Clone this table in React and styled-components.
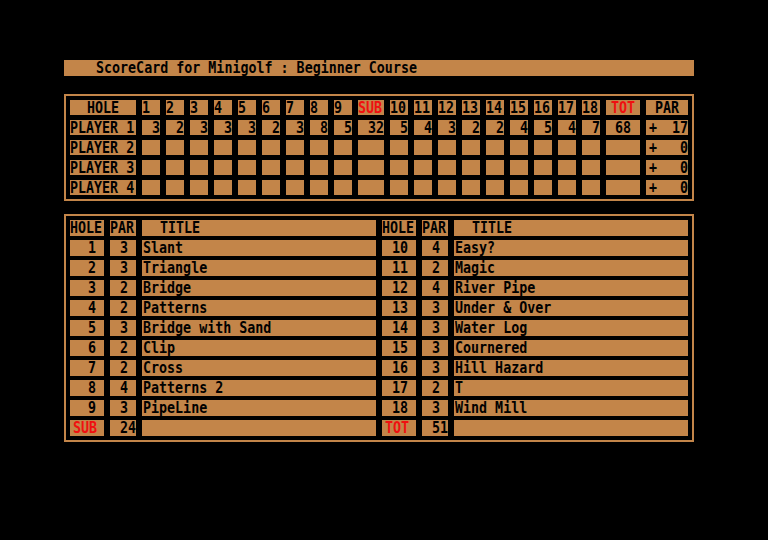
import styled, { createGlobalStyle } from "styled-components";

const ORANGE = "#c38549";
const RED = "#f01010";

const GlobalStyle = createGlobalStyle`
html, body {
    margin: 0;
    padding: 0;
    background: #000;
}
body {
    font-family: "DejaVu Sans Mono", "Liberation Mono", monospace;
    font-size: 13.33px;
    font-weight: bold;
    color: #000;
}
`

const Page = styled.div`
width: 630px;
padding-top: 60px;
padding-left: 64px;
`

const TitleBar = styled.div`
height: 16px;
background: ${ORANGE};
padding-left: 32px;
display: flex;
align-items: center;
`

const Frame = styled.div`
margin-top: ${p => p.$top}px;
border: 2px solid ${ORANGE};
padding: 4px;
`

const Grid = styled.div`
display: grid;
grid-template-columns: ${p => p.$cols};
grid-auto-rows: ${p => p.$row}px;
column-gap: 6px;
row-gap: ${p => p.$gap}px;
`

const Cell = styled.div`
background: ${ORANGE};
color: ${p => (p.$red ? RED : "#000")};
display: flex;
align-items: center;
justify-content: ${p => p.$align || "flex-start"};
padding-left: ${p => p.$pl || 0}px;
padding-right: ${p => p.$pr || 0}px;
white-space: pre;
`

const Txt = styled.span`
display: inline-block;
transform: scaleY(1.25);
line-height: 0.85;
`

const T = ({ children }) => <Txt>{children}</Txt>

const front = [3, 2, 3, 3, 3, 2, 3, 8, 5];
const back = [5, 4, 3, 2, 2, 4, 5, 4, 7];

const nine = "18px ".repeat(9);
const scoreCols = `66px ${nine}26px ${nine}34px 42px`;

const course = [
    [1, 3, "Slant", 10, 4, "Easy?"],
    [2, 3, "Triangle", 11, 2, "Magic"],
    [3, 2, "Bridge", 12, 4, "River Pipe"],
    [4, 2, "Patterns", 13, 3, "Under & Over"],
    [5, 3, "Bridge with Sand", 14, 3, "Water Log"],
    [6, 2, "Clip", 15, 3, "Cournered"],
    [7, 2, "Cross", 16, 3, "Hill Hazard"],
    [8, 4, "Patterns 2", 17, 2, "T"],
    [9, 3, "PipeLine", 18, 3, "Wind Mill"],
];

const PlayerRow = ({ n, scores, sub, tot, par }) => (
    <>
        <Cell><T>{`PLAYER ${n}`}</T></Cell>
        {[0, 1, 2, 3, 4, 5, 6, 7, 8].map(i => (
            <Cell key={"f" + i} $align="flex-end">{scores && <T>{scores[0][i]}</T>}</Cell>
        ))}
        <Cell $align="flex-end">{sub && <T>{sub}</T>}</Cell>
        {[0, 1, 2, 3, 4, 5, 6, 7, 8].map(i => (
            <Cell key={"b" + i} $align="flex-end">{scores && <T>{scores[1][i]}</T>}</Cell>
        ))}
        <Cell $align="center">{tot && <T>{tot}</T>}</Cell>
        <Cell $align="space-between" $pl={3}><T>+</T><T>{par}</T></Cell>
    </>
)

const Row = ({ r }) => (
    <>
        <Cell $align="flex-end" $pr={8}><T>{r[0]}</T></Cell>
        <Cell $align="flex-end" $pr={8}><T>{r[1]}</T></Cell>
        <Cell $pl={1}><T>{r[2]}</T></Cell>
        <Cell $align="flex-end" $pr={8}><T>{r[3]}</T></Cell>
        <Cell $align="flex-end" $pr={8}><T>{r[4]}</T></Cell>
        <Cell $pl={1}><T>{r[5]}</T></Cell>
    </>
)

const App = () => {
    return (
        <Page>
            <GlobalStyle />
            <TitleBar><T>ScoreCard for Minigolf : Beginner Course</T></TitleBar>

            <Frame $top={18}>
                <Grid $cols={scoreCols} $row={15} $gap={5}>
                    <Cell $align="center"><T>HOLE</T></Cell>
                    {[1, 2, 3, 4, 5, 6, 7, 8, 9].map(h => <Cell key={h}><T>{h}</T></Cell>)}
                    <Cell $red><T>SUB</T></Cell>
                    {[10, 11, 12, 13, 14, 15, 16, 17, 18].map(h => <Cell key={h}><T>{h}</T></Cell>)}
                    <Cell $red $align="center"><T>TOT</T></Cell>
                    <Cell $align="center"><T>PAR</T></Cell>

                    <PlayerRow n={1} scores={[front, back]} sub={32} tot={68} par={17} />
                    <PlayerRow n={2} par={0} />
                    <PlayerRow n={3} par={0} />
                    <PlayerRow n={4} par={0} />
                </Grid>
            </Frame>

            <Frame $top={13}>
                <Grid $cols="34px 26px 234px 34px 26px 234px" $row={16} $gap={4}>
                    <Cell><T>HOLE</T></Cell>
                    <Cell><T>PAR</T></Cell>
                    <Cell $pl={18}><T>TITLE</T></Cell>
                    <Cell><T>HOLE</T></Cell>
                    <Cell><T>PAR</T></Cell>
                    <Cell $pl={18}><T>TITLE</T></Cell>

                    {course.map(r => (
                        <Row key={r[0]} r={r} />
                    ))}

                    <Cell $red $pl={3}><T>SUB</T></Cell>
                    <Cell $align="flex-end"><T>24</T></Cell>
                    <Cell />
                    <Cell $red $pl={3}><T>TOT</T></Cell>
                    <Cell $align="flex-end"><T>51</T></Cell>
                    <Cell />
                </Grid>
            </Frame>
        </Page>
    )
}

export default App;
